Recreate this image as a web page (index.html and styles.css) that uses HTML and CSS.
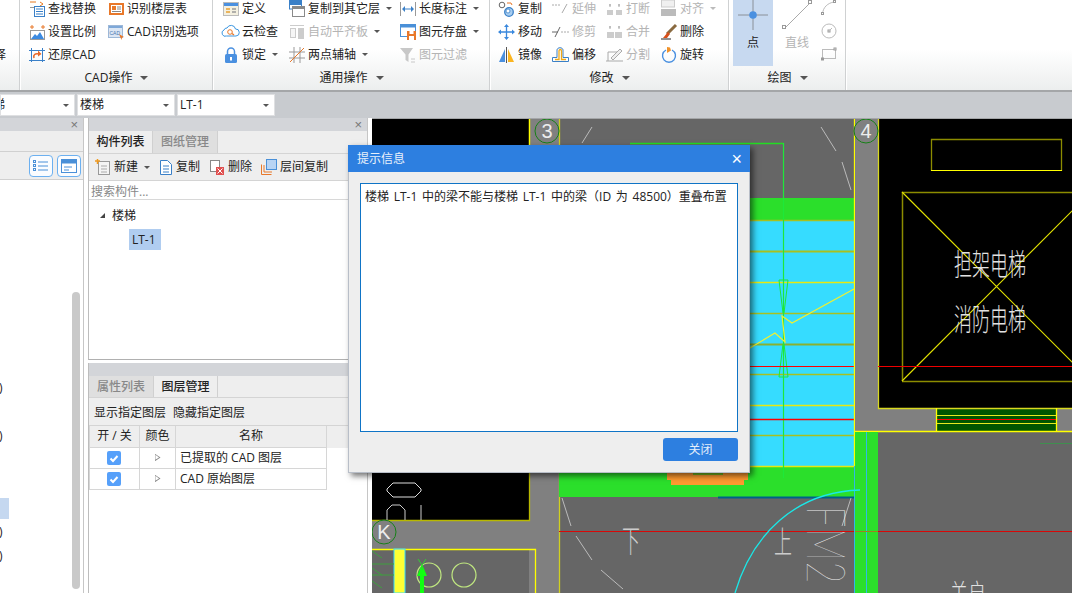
FILE: index.html
```html
<!DOCTYPE html>
<html lang="zh-CN">
<head>
<meta charset="utf-8">
<title>提示信息</title>
<link rel="stylesheet" href="styles.css">
</head>
<body>
<header class="ribbon">
  <section class="group g0"><div class="g-body"><span></span><span></span><span class="clip-text">择</span></div></section>

  <section class="group g1">
    <div class="g-body">
      <div class="item"><svg class="ic" viewBox="0 0 16 16"><path d="M1 1h6M11 1l3 2-3 2" fill="none" stroke="#e87a20"/><rect x="1" y="6" width="4" height="1" fill="#999"/><rect x="5.500" y="5.500" width="10" height="10" fill="#fff" stroke="#3a80c8"/><path d="M7 8h7M7 10.500h7M7 13h7" stroke="#3a80c8"/></svg><span>查找替换</span></div>
      <div class="item"><svg class="ic" viewBox="0 0 16 16"><rect x="1" y="2" width="15" height="12" fill="#e8782a"/><rect x="3" y="4" width="11" height="8" fill="#fff"/><rect x="4" y="5" width="4" height="4" fill="#e8782a"/><path d="M9 6h4M9 8h4M4 10.500h9" stroke="#888"/></svg><span>识别楼层表</span></div>
      <div class="item"><svg class="ic" viewBox="0 0 16 16"><path d="M1 3h4M3 1v4M12 3h4M14 1v4" stroke="#e8782a" fill="none"/><rect x="1.500" y="6.500" width="14" height="9" fill="#fff" stroke="#999"/><path d="M2 15l4-5 2 2 3-4 4 7z" fill="#3c8ae0"/></svg><span>设置比例</span></div>
      <div class="item"><svg class="ic" viewBox="0 0 16 16"><rect x="0.500" y="1.500" width="14" height="12" fill="#dbe6f4" stroke="#9db8d8"/><rect x="1" y="2" width="13" height="2" fill="#7ea8d8"/><text class="ic-text" x="1.500" y="10.500">CAD</text><path d="M11 10l5 3-2 .5-.5 2.500z" fill="#e8782a"/></svg><span>CAD识别选项</span></div>
      <div class="item"><svg class="ic" viewBox="0 0 16 16"><path d="M0 3.500h16M0 13.500h16M2.500 1v14M13.500 1v14" stroke="#3a80c8" fill="none"/><path d="M5 11c-1-3 1-5 5-4" fill="none" stroke="#e8682a" stroke-width="1.600"/><path d="M9 3.500l3.500 3.500-3.500 2.500z" fill="#e8682a"/></svg><span>还原CAD</span></div>
    </div>
    <div class="g-label"><span>CAD操作</span><i class="caret"></i></div>
  </section>

  <section class="group g2">
    <div class="g-body">
      <div class="item"><svg class="ic" viewBox="0 0 16 16"><rect x="0.500" y="1.500" width="15" height="13" fill="#f4f0e0" stroke="#bbb"/><rect x="1" y="2" width="14" height="3" fill="#4a90e0"/><path d="M3 8h4M3 11h4" stroke="#e8a030" stroke-width="1.500"/><path d="M9 8h4M9 11h4" stroke="#999" stroke-width="1.500"/></svg><span>定义</span></div>
      <div class="item"><svg class="ic" viewBox="0 0 16 16"><rect x="0.500" y="-2" width="12" height="10" fill="#fff" stroke="#3a80c8"/><rect x="0" y="-2" width="13" height="6" fill="#3a80c8"/><rect x="3.500" y="5.500" width="12" height="10" fill="#fff" stroke="#8a8a8a"/><rect x="3" y="5" width="13" height="3" fill="#8a8a8a"/></svg><span>复制到其它层</span><i class="caret sm"></i></div>
      <div class="item"><svg class="ic" viewBox="0 0 16 16"><path d="M.5 1v14" stroke="#999"/><path d="M15.500 1v14" stroke="#999"/><path d="M3 8h10" stroke="#3a80c8"/><path d="M2 8l3-3v6zM14 8l-3-3v6z" fill="#3a80c8"/></svg><span>长度标注</span><i class="caret sm"></i></div>

      <div class="item"><svg class="ic" viewBox="0 0 16 16"><path d="M1 6a3 3 0 0 1 3-2 4.500 4.500 0 0 1 8.500 1A3 3 0 0 1 13 12H3.500a3 3 0 0 1-2.500-6z" fill="#fff" stroke="#3c96e0"/><circle cx="7" cy="8" r="2.300" fill="none" stroke="#e8782a"/><path d="M9 9.500l2 1.500" stroke="#e8782a" stroke-width="1.300"/></svg><span>云检查</span></div>
      <div class="item off"><svg class="ic" viewBox="0 0 16 16"><rect x="1" y="1" width="14" height="1" fill="#ccc"/><rect x="1.500" y="4.500" width="5" height="9" fill="#f6f6f6" stroke="#ccc"/><rect x="9" y="4" width="6" height="11" fill="#ccc"/></svg><span>自动平齐板</span><i class="caret sm"></i></div>
      <div class="item"><svg class="ic" viewBox="0 0 16 16"><rect x="0.500" y="0.500" width="15" height="12" fill="#fff" stroke="#4a90d8"/><rect x="1" y="1" width="14" height="2.500" fill="#4a90d8"/><rect x="7" y="7" width="9" height="9" fill="#e8782a"/><rect x="9.500" y="7" width="4" height="3" fill="#fff"/><rect x="9" y="12" width="5" height="4" fill="#fff"/></svg><span>图元存盘</span><i class="caret sm"></i></div>

      <div class="item"><svg class="ic" viewBox="0 0 16 16"><rect x="2" y="7" width="12" height="9" rx="1.500" fill="#4a90e0"/><path d="M4.500 7V4.500a3.500 3.500 0 0 1 7 0V7" fill="none" stroke="#4a90e0" stroke-width="1.500"/><rect x="7" y="10" width="2" height="3.500" fill="#fff"/></svg><span>锁定</span><i class="caret sm"></i></div>
      <div class="item"><svg class="ic" viewBox="0 0 16 16"><path d="M0 5h16M0 11h16M5 0v16M11 0v16" stroke="#999" fill="none"/><path d="M1 15L15 1" stroke="#e8782a"/></svg><span>两点辅轴</span><i class="caret sm"></i></div>
      <div class="item off"><svg class="ic" viewBox="0 0 16 16"><path d="M0 1h13L8.500 7.500V15L5.500 13V7.500z" fill="#c8c8c8"/><path d="M11 12h4M11 15h4" stroke="#c8c8c8"/></svg><span>图元过滤</span></div>
    </div>
    <div class="g-label"><span>通用操作</span><i class="caret"></i></div>
  </section>

  <section class="group g3">
    <div class="g-body">
      <div class="item"><svg class="ic" viewBox="0 0 17 16"><circle cx="4" cy="4" r="2.800" fill="#fff" stroke="#666"/><path d="M9 2h4l1 2" fill="none" stroke="#e8782a"/><circle cx="11" cy="11" r="4.300" fill="#a8cdf0" stroke="#3a80c8" stroke-width="1.300"/><circle cx="10" cy="10" r="2" fill="#fff" stroke="#3a80c8" stroke-width=".8"/></svg><span>复制</span></div>
      <div class="item off"><svg class="ic" viewBox="0 0 17 16"><path d="M0 4h9" stroke="#aaa" stroke-dasharray="2 1"/><path d="M10 12l5-9" stroke="#aaa"/></svg><span>延伸</span></div>
      <div class="item off"><svg class="ic" viewBox="0 0 17 16"><rect x="1" y="9" width="6" height="5" fill="#ccc"/><rect x="10" y="9" width="6" height="5" fill="#ccc"/><path d="M3 4h2M12 4h2M4 3v3M13 3v3" stroke="#aaa"/></svg><span>打断</span></div>
      <div class="item off"><svg class="ic" viewBox="0 0 17 16"><rect x="1.500" y="-1" width="13" height="7" fill="#f0f0f0" stroke="#ccc"/><rect x="1" y="8" width="15" height="7" fill="#bbb"/></svg><span>对齐</span><i class="caret sm lite"></i></div>

      <div class="item"><svg class="ic" viewBox="0 0 17 16"><path d="M8.500 2v12M2 8h13" stroke="#3a88dd" stroke-width="1.300"/><path d="M8.500 0l2.500 3H6zM8.500 16l2.500-3H6zM0 8l3-2.500v5zM17 8l-3-2.500v5z" fill="#3a88dd"/></svg><span>移动</span></div>
      <div class="item off"><svg class="ic" viewBox="0 0 17 16"><path d="M0 8h6" stroke="#666"/><path d="M9 8h8" stroke="#aaa" stroke-dasharray="2 1"/><path d="M3 13l5-10" stroke="#666"/></svg><span>修剪</span></div>
      <div class="item off"><svg class="ic" viewBox="0 0 17 16"><rect x="1" y="8" width="15" height="6" fill="#ccc"/><path d="M3 3h2M12 3h2M4 2v3M13 2v3" stroke="#aaa"/><path d="M8.500 8v6" stroke="#fff"/></svg><span>合并</span></div>
      <div class="item"><svg class="ic" viewBox="0 0 17 16"><path d="M16 1L7 10" stroke="#8a6a40" stroke-width="3"/><path d="M8 8l2 2-3 4H3z" fill="#d8501a"/><path d="M1 15h10" stroke="#222"/></svg><span>删除</span></div>

      <div class="item"><svg class="ic" viewBox="0 0 17 16"><path d="M7 2v13H1z" fill="#4a90e0"/><path d="M10 2v13h6z" fill="#fbb520"/><path d="M8.500 0v16" stroke="#555"/></svg><span>镜像</span></div>
      <div class="item"><svg class="ic" viewBox="0 0 17 16"><path d="M.5 14.500V10.500h4.500V3c0-3 6-3 6 0v7.500h5.500v4z" fill="#fff" stroke="#3a80c8"/><path d="M3 12.500h4V4c0-2 2.500-2 2.500 0v8.500H14" fill="none" stroke="#f0a818" stroke-width="1.300"/></svg><span>偏移</span></div>
      <div class="item off"><svg class="ic" viewBox="0 0 17 16"><path d="M0 14h17M2 14V5h9" stroke="#aaa" fill="none"/><path d="M5 11l9-9 2 2-9 9z" fill="#eee" stroke="#aaa"/></svg><span>分割</span></div>
      <div class="item"><svg class="ic" viewBox="0 0 17 16"><path d="M6 3a6.500 6.500 0 1 0 6 0" fill="none" stroke="#4a90e0" stroke-width="1.400"/><path d="M7 0v6l4-2.500-1-3z" fill="#f0922a"/></svg><span>旋转</span></div>
    </div>
    <div class="g-label"><span>修改</span><i class="caret"></i></div>
  </section>

  <section class="group g4">
    <div class="draw-row">
      <div class="big active">
        <svg class="big-ic" viewBox="0 0 30 30"><path d="M15 0v30M0 15h30" stroke="#8a9098"/><circle cx="15" cy="15" r="3.800" fill="#4a90e0"/></svg>
        <span>点</span>
      </div>
      <div class="big off">
        <svg class="big-ic line" viewBox="0 0 34 30"><path d="M6 27L30 3" stroke="#aaa"/><rect x="2.500" y="25.500" width="3" height="3" fill="#fff" stroke="#999"/><rect x="28.500" y="0.500" width="3" height="3" fill="#fff" stroke="#999"/></svg>
        <span>直线</span>
      </div>
      <div class="mini">
        <svg class="mini-ic" viewBox="0 0 16 16"><path d="M1.500 14C2 7 7 3 13 2" fill="none" stroke="#bbb"/><rect x="0.500" y="12.500" width="2" height="2" fill="#fff" stroke="#999"/><rect x="12.500" y="0.500" width="2" height="2" fill="#fff" stroke="#999"/></svg>
        <svg class="mini-ic" viewBox="0 0 16 16"><circle cx="8" cy="8" r="7" fill="none" stroke="#bbb"/><rect x="7" y="7" width="2" height="2" fill="#fff" stroke="#999"/><path d="M8 8l3-3" stroke="#bbb"/></svg>
        <svg class="mini-ic" viewBox="0 0 16 16"><rect x="1.500" y="3.500" width="13" height="9" fill="none" stroke="#bbb"/><rect x="0.500" y="12" width="2" height="2" fill="#fff" stroke="#999"/><rect x="13" y="2" width="2" height="2" fill="#fff" stroke="#999"/></svg>
      </div>
    </div>
    <div class="g-label"><span>绘图</span><i class="caret"></i></div>
  </section>
</header>

<nav class="combos">
  <div class="combo c1"><span class="clip-text">梯</span><i class="caret sm"></i></div>
  <div class="combo c2"><span>楼梯</span><i class="caret sm"></i></div>
  <div class="combo c2"><span>LT-1</span><i class="caret sm"></i></div>
</nav>

<main class="main">
  <aside class="left">
    <div class="p-head"><span class="p-x">×</span></div>
    <div class="left-tabs"></div>
    <div class="left-tools">
      <button class="tool-btn"><svg viewBox="0 0 16 14"><path d="M5 3h10M5 7h10M5 11h10" stroke="#4a90d8"/><rect x="0.500" y="1.500" width="2" height="2" fill="none" stroke="#4a90d8"/><rect x="0.500" y="5.500" width="2" height="2" fill="none" stroke="#4a90d8"/><rect x="0.500" y="9.500" width="2" height="2" fill="none" stroke="#4a90d8"/></svg></button>
      <button class="tool-btn"><svg viewBox="0 0 16 14"><rect x="0.500" y="0.500" width="15" height="13" fill="#fff" stroke="#4a90d8"/><rect x="1" y="1" width="14" height="3.500" fill="#4a90d8"/><path d="M3 8h8M3 11h5" stroke="#4a90d8"/></svg></button>
    </div>
    <div class="left-list">
      <div class="l-row"></div><div class="l-row"></div><div class="l-row"></div><div class="l-row"></div>
      <div class="l-row"></div><div class="l-row"></div><div class="l-row"></div><div class="l-row"></div>
      <div class="l-row"><span class="clip-paren">)</span></div>
      <div class="l-row"></div>
      <div class="l-row"><span class="clip-paren">)</span></div>
      <div class="l-row"></div><div class="l-row"></div>
      <div class="l-row sel"></div>
      <div class="l-row"><span class="clip-paren">)</span></div>
      <div class="l-row"><span class="clip-paren">)</span></div>
      <div class="scroll"></div>
    </div>
  </aside>

  <div class="center">
    <section class="pane upper">
      <div class="p-head"><span class="p-x">×</span></div>
      <div class="tabs"><div class="tab on">构件列表</div><div class="tab">图纸管理</div></div>
      <div class="tools">
        <div class="tool t-new"><svg class="ic" viewBox="0 0 16 16"><rect x="3.500" y="2.500" width="11" height="13" fill="#f4f4f4" stroke="#999"/><path d="M6 7h6M6 10h6M6 13h6" stroke="#aaa"/><path d="M0 2h5M2.500 0v5" stroke="#f09a20" stroke-width="1.500"/></svg><span>新建</span><i class="caret sm"></i></div>
        <div class="tool t-copy"><svg class="ic" viewBox="0 0 16 16"><path d="M2.500 1.500h7l4 4v10h-11z" fill="#fff" stroke="#3a80c8"/><path d="M5 7h6M5 10h6M5 13h6" stroke="#3a80c8"/></svg><span>复制</span></div>
        <div class="tool t-del"><svg class="ic" viewBox="0 0 16 16"><rect x="1.500" y="1.500" width="9" height="11" fill="#fff" stroke="#888"/><rect x="7" y="8" width="8" height="8" fill="#e05050"/><path d="M8.500 9.500l5 5M13.500 9.500l-5 5" stroke="#fff"/></svg><span>删除</span></div>
        <div class="tool t-layer"><svg class="ic" viewBox="0 0 16 16"><path d="M.5 15.500v-10M.5 15.500h10M3 13V6M3 13h8" stroke="#e8782a" fill="none"/><rect x="5.500" y="0.500" width="10" height="10" fill="#b8d4f4" stroke="#4a90d8"/></svg><span>层间复制</span></div>
      </div>
      <div class="search">搜索构件...</div>
      <div class="tree">
        <div class="tree-root"><i class="tri"></i><span>楼梯</span></div>
        <div class="tree-leaf"><span>LT-1</span></div>
      </div>
    </section>

    <section class="pane lower">
      <div class="p-head"></div>
      <div class="tabs"><div class="tab">属性列表</div><div class="tab on">图层管理</div></div>
      <div class="tools layer-tools"><span>显示指定图层</span><span>隐藏指定图层</span></div>
      <div class="table-wrap">
        <table class="layers">
          <thead><tr><th class="c-a">开 / 关</th><th class="c-b">颜色</th><th class="c-c">名称</th></tr></thead>
          <tbody>
            <tr><td class="mid"><i class="check"><svg viewBox="0 0 14 14"><path d="M3.500 7.500l2.500 2.500 4.500-5" fill="none" stroke="#fff" stroke-width="2"/></svg></i></td><td class="mid"><i class="play"></i></td><td>已提取的 CAD 图层</td></tr>
            <tr><td class="mid"><i class="check"><svg viewBox="0 0 14 14"><path d="M3.500 7.500l2.500 2.500 4.500-5" fill="none" stroke="#fff" stroke-width="2"/></svg></i></td><td class="mid"><i class="play"></i></td><td>CAD 原始图层</td></tr>
          </tbody>
        </table>
      </div>
    </section>
  </div>

  <div class="canvas">
    <svg class="cad" viewBox="372 118 700 475" width="700" height="475">
      <rect x="372" y="118" width="700" height="475" fill="#666"/>
      <!-- left black room and walls -->
      <rect x="372" y="118" width="157" height="402" fill="#000"/>
      <rect x="529" y="118" width="30" height="475" fill="#808080"/>
      <rect x="372" y="520" width="187" height="29" fill="#808080"/>
      <rect x="535" y="549" width="24" height="44" fill="#808080"/>
      <path d="M529.500 118V520.500H372" fill="none" stroke="#b8b800" stroke-width="1.300"/>
      <path d="M529.500 118V200" fill="none" stroke="#ff0" stroke-width="1.300"/>
      <path d="M559.500 118V593" stroke="#d0d020" stroke-width="1.300"/>
      <path d="M372 549.500H535.500V593" fill="none" stroke="#ff0" stroke-width="1.300"/>
      <rect x="394" y="549" width="11" height="44" fill="#ff3" stroke="#36dcff"/>
      <!-- white shapes in black room -->
      <path d="M393 483h22l6 6v2l-6 6h-22l-6-6v-2z" fill="none" stroke="#ddd"/>
      <path d="M387 520v-10l5-5h8l5 5v10M421 505v15" fill="none" stroke="#ccc"/>
      <!-- lower-left room -->
      <g stroke="#3f9f3f" fill="none"><path d="M372 551l10 7M372 564h22M372 568l10 7M372 575h22M372 581l10 7"/></g>
      <circle cx="429" cy="575" r="12" fill="none" stroke="#c0e880" stroke-width="1.200"/>
      <circle cx="464" cy="575" r="12" fill="none" stroke="#c0e880" stroke-width="1.200"/>
      <path d="M422 593v-22" stroke="#1f1" stroke-width="4"/>
      <path d="M422 564l-5 12h10z" fill="#1f1"/>
      <path d="M418 559l4 6 4-6M422 565v5" stroke="#3c3" fill="none"/>
      <!-- centre room -->
      <rect x="559" y="198" width="296" height="22" fill="#2bdf2b"/>
      <rect x="559" y="220" width="296" height="246" fill="#36dcff"/>
      <rect x="559" y="466" width="296" height="31" fill="#2bdf2b"/>
      <path d="M718 497.500h137" stroke="#00608a" stroke-width="2"/>
      <path d="M630 143.500H783.500" stroke="#22dd22" stroke-width="1.500" fill="none"/>
      <g fill="none">
        <path d="M559 220.500h296M559 313.500h296M559 374.500h296M559 435.500h296" stroke="#a8c020" stroke-width="1.500"/>
        <path d="M559 251.500h296" stroke="#a8c020" stroke-width="1.800"/>
        <path d="M559 344.500h296" stroke="#8ab030" stroke-width="2.200"/>
        <path d="M559 282.500h296M559 405.500h296M559 466.500h296" stroke="#e8e810" stroke-width="1.600"/>
      </g>
      <path d="M783.500 143V478" stroke="#1ee83a" stroke-width="1.200"/>
      <path d="M779 280h9l-4 33h-1zM783 344h1l4 33h-9z" fill="none" stroke="#1ee83a"/>
      <path d="M750 348l25-15 10 9-3-26 10 7 62-34" fill="none" stroke="#f0f030" stroke-width="1.200"/>
      <path d="M559 366.500H855" stroke="#f00"/>
      <path d="M559 419.500H855" stroke="#f00" stroke-width="1.300"/>
      <path d="M559 531.500H1072" stroke="#d80808"/>
      <path d="M854.500 118V466" stroke="#ff0" stroke-width="1.300"/>
      <path d="M854.500 466V593" stroke="#30b8e8"/>
      <!-- stair landing orange -->
      <path d="M667 472h81v8h-4v5h-73v-5h-4z" fill="#ff9a30"/>
      <rect x="693" y="472" width="30" height="3" fill="#78b820"/>
      <!-- door swing lines -->
      <g stroke="#bbb" fill="none">
        <path d="M592 127l-10 16M821 127l15 24M842 162l9 28"/>
        <path d="M562 498l9 28M576 536l16 24M601 570l22 19M851 498l-9 28"/>
      </g>
      <!-- right column and lift shaft -->
      <rect x="855" y="118" width="23" height="313" fill="#808080"/>
      <rect x="878" y="408" width="194" height="23" fill="#808080"/>
      <rect x="878" y="118" width="194" height="290" fill="#000"/>
      <rect x="936" y="408" width="120" height="23" fill="#005500"/>
      <path d="M936 408.500h120" stroke="#30a8d0"/>
      <path d="M936 415.500h120M936 423.500h120" stroke="#e8e820"/>
      <path d="M936 419.500h120" stroke="#f00"/>
      <path d="M878.500 118V408.500H1072" fill="none" stroke="#d8d820" stroke-width="1.300"/>
      <path d="M854 431.500H1072" stroke="#ff0" stroke-width="1.300"/>
      <path d="M936.500 408V431M1056.500 408V431" stroke="#ff0" stroke-width="1.300"/>
      <path d="M931.500 171V139.500H1061.500V171" fill="none" stroke="#8c8c00" stroke-width="1.300"/>
      <path d="M931 170.500H1062" stroke="#ff0"/>
      <path d="M902.500 381V192.500H1072M902 381.500H1072" fill="none" stroke="#8c8c00" stroke-width="1.500"/>
      <path d="M902 192L1091 381M902 381L1091 192" stroke="#e0e000" stroke-width="1.200"/>
      <path d="M878 366.500H1072" stroke="#e00"/>
      <!-- green column and lower room -->
      <rect x="855" y="432" width="23" height="161" fill="#2bdf2b"/>
      <path d="M866.500 432V593" stroke="#30b8e8"/>
      <path d="M855 531.500H878" stroke="#a08020"/>
      <path d="M1040 443.500h32" stroke="#3f8f4f"/>
      <path d="M735 593C752 535 795 492 860 490" fill="none" stroke="#1ae8e8" stroke-width="1.300"/>
      <!-- axis bubbles -->
      <g fill="#808080" stroke="#178017">
        <circle cx="547" cy="131" r="12"/>
        <circle cx="866" cy="131" r="12"/>
        <circle cx="384" cy="532" r="12"/>
      </g>
      <text class="bubble" x="547" y="138">3</text>
      <text class="bubble" x="866" y="138">4</text>
      <text class="bubble" x="384" y="539">K</text>
      <!-- top edge of the drawing -->
      <path d="M372 118.500H1072" stroke="#a4a6a8"/>
      <!-- drawing labels -->
      <text class="cad-text" transform="translate(954 275) scale(1 1.650)">担架电梯</text>
      <text class="cad-text" transform="translate(954 330) scale(1 1.650)">消防电梯</text>
      <text class="cad-text dim" transform="translate(622 552) scale(1 1.700)">下</text>
      <text class="cad-text dim" transform="translate(774 553) scale(1 1.700)">上</text>
      <text class="cad-text" transform="translate(950 601) scale(1 1.300)">关户</text>
      <text class="cad-fm" transform="translate(807 506) rotate(90) scale(.72 1)">FM2</text>
    </svg>
  </div>
</main>

<section class="dialog" role="dialog">
  <div class="d-title"><span>提示信息</span><span class="d-x">×</span></div>
  <div class="d-body">
    <div class="d-msg">楼梯 LT-1 中的梁不能与楼梯 LT-1 中的梁（ID 为 48500）重叠布置</div>
    <div class="d-foot"><button class="d-btn">关闭</button></div>
  </div>
</section>
</body>
</html>
```
FILE: styles.css
```css
* { box-sizing: border-box; }
html, body { margin: 0; height: 593px; overflow: hidden; }
body {
  position: relative;
  font: 12px/14px "Open Sans", "Noto Sans CJK SC", "Liberation Sans", sans-serif;
  color: #222;
  background: #fff;
}
svg { display: block; }

/* ribbon */
.ribbon {
  display: flex;
  height: 92px;
  overflow: hidden;
  background: linear-gradient(#fff 55%, #eceeee);
  border-bottom: 2px solid #a4a6a8;
}
.group {
  display: flex;
  flex-direction: column;
  height: 90px;
  border-right: 1px solid #cfd1d2;
  box-shadow: 1px 0 0 #fff;
  margin-right: 1px;
}
.g0 { width: 20px; }
.g1 { width: 192px; }
.g2 { width: 276px; }
.g3 { width: 238px; }
.g4 { width: 116px; margin-right: 0; }
.g-body {
  display: grid;
  grid-auto-rows: 23px;
  height: 69px;
  margin-top: -3px;
  margin-bottom: 5px;
}
.g0 .g-body { grid-template-columns: 20px; }
.g1 .g-body { grid-template-columns: 79px 1fr; padding-left: 8px; }
.g2 .g-body { grid-template-columns: 66px 111px 1fr; padding-left: 9px; }
.g3 .g-body { grid-template-columns: 54px 54px 54px 1fr; padding-left: 7px; }
.item { display: flex; align-items: center; gap: 3px; white-space: nowrap; }
.ic { width: 16px; height: 16px; flex: none; overflow: visible; }
.g3 .ic { width: 17px; }
.ic-text { font: 5px "Liberation Sans", sans-serif; fill: #4a78b0; }
.off { color: #b4b4b4; }
.clip-text { display: block; width: 6px; overflow: hidden; direction: rtl; align-self: center; }
.g-label {
  display: flex;
  justify-content: center;
  align-items: center;
  gap: 8px;
  height: 14px;
  color: #222;
}
.caret {
  display: inline-block;
  width: 0;
  height: 0;
  border-left: 4px solid transparent;
  border-right: 4px solid transparent;
  border-top: 4px solid #555;
}
.caret.sm { border-left-width: 3px; border-right-width: 3px; border-top-width: 3px; margin-left: 3px; }
.caret.lite { border-top-color: #bbb; }

.draw-row { display: flex; height: 66px; margin-bottom: 5px; padding-left: 3px; }
.big { display: flex; flex-direction: column; align-items: center; width: 40px; }
.big.active { background: #c7d9f0; }
.big-ic { width: 30px; height: 30px; flex: none; margin-bottom: 6px; }
.big-ic.line { width: 34px; }
.big.off { width: 46px; padding-left: 2px; }
.mini { display: flex; flex-direction: column; gap: 7px; margin-left: 2px; }
.mini-ic { width: 16px; height: 16px; }

/* combos */
.combos {
  display: flex;
  gap: 2px;
  height: 26px;
  padding-top: 2px;
  background: #c8cbcf;
}
.combo {
  display: flex;
  align-items: center;
  justify-content: space-between;
  height: 22px;
  padding: 0 5px 0 2px;
  background: #fff;
  border: 1px solid #dfe0e2;
}
.c1 { width: 75px; padding-left: 0; }
.c1 .clip-text { width: 4px; }
.c2 { width: 98px; }

/* main */
.main { display: flex; height: 475px; overflow: hidden; }
.left {
  display: flex;
  flex-direction: column;
  width: 84px;
  margin-right: 4px;
  border-right: 1px solid #c6c6c6;
}
.p-head {
  display: flex;
  align-items: center;
  justify-content: flex-end;
  height: 13px;
  padding-right: 5px;
  background: #d3d5d9;
  flex: none;
}
.p-x { font: 13px/13px "Liberation Sans", sans-serif; color: #777; }
.left-tabs { height: 21px; background: #eee; border-bottom: 1px solid #d0d0d0; flex: none; }
.left-tools {
  display: flex;
  justify-content: flex-end;
  gap: 4px;
  height: 28px;
  padding: 3px 2px 0 0;
  background: #eee;
  border-bottom: 1px solid #d0d0d0;
  flex: none;
}
.tool-btn {
  display: flex;
  align-items: center;
  justify-content: center;
  width: 24px;
  height: 22px;
  padding: 0;
  background: #fafcff;
  border: 1px solid #6cb0f0;
  border-radius: 4px;
}
.tool-btn svg { width: 16px; height: 14px; }
.left-list { position: relative; flex: 1; padding-top: 4px; overflow: hidden; }
.l-row { display: flex; align-items: center; height: 24px; }
.clip-paren { margin-left: -1px; }
.l-row.sel::before { content: ""; display: block; width: 9px; height: 21px; background: #c5d8f0; }
.scroll {
  position: absolute;
  top: 112px;
  left: 72px;
  width: 8px;
  height: 297px;
  background: #c9c9c9;
  border-radius: 4px;
}

.center { display: flex; flex-direction: column; gap: 3px; width: 280px; }
.pane { display: flex; flex-direction: column; border-left: 1px solid #bdbdbd; border-right: 1px solid #c6c6c6; }
.upper { height: 242px; border-bottom: 1px solid #b0b0b0; }
.lower { flex: 1; }
.tabs {
  display: flex;
  height: 23px;
  background: #eee;
  border-bottom: 1px solid #d4d4d4;
  flex: none;
}
.lower .tabs { height: 22px; }
.tab {
  display: flex;
  align-items: center;
  justify-content: center;
  width: 65px;
  color: #888;
  font-weight: 500;
  background: #dfdfdf;
  border-right: 1px solid #d0d0d0;
}
.tab.on { width: 64px; color: #222; background: #eee; }
.tools {
  display: flex;
  align-items: center;
  height: 27px;
  background: #eee;
  border-bottom: 1px solid #d4d4d4;
  flex: none;
}
.tool { display: flex; align-items: center; gap: 3px; white-space: nowrap; }
.t-new { margin-left: 6px; }
.t-copy { margin-left: 8px; gap: 2px; }
.t-del { margin-left: 9px; }
.t-layer { margin-left: 9px; }
.search { height: 19px; padding: 4px 2px 0; color: #888; background: #fff; border-bottom: 1px solid #d8d8d8; flex: none; }
.tree { flex: 1; background: #fff; }
.tree-root { display: flex; align-items: center; height: 29px; padding: 2px 0 0 11px; gap: 7px; }
.tri { width: 0; height: 0; border-left: 5px solid transparent; border-bottom: 5px solid #444; }
.tree-leaf { height: 21px; padding-left: 40px; }
.tree-leaf span { display: flex; align-items: center; width: 32px; height: 21px; padding-left: 3px; background: #b0cdf0; }

.layer-tools { height: 28px; gap: 7px; padding: 2px 0 0 5px; }
.table-wrap { flex: 1; background: linear-gradient(#eee 22px, #fff 22px); }
.layers { width: 238px; border-collapse: collapse; table-layout: fixed; margin: 0; }
.layers th, .layers td { height: 21px; padding: 0; border: 1px solid #d6d6d6; font-weight: 400; }
.layers thead th { background: #eee; border-top: 0; }
.layers td { background: #fff; padding-left: 4px; }
.layers td.mid { padding-left: 0; }
.c-a { width: 50px; }
.c-b { width: 36px; }
.check {
  display: block;
  width: 14px;
  height: 14px;
  margin-left: 17px;
  background: #56a0fa;
  border-radius: 2px;
}
.play {
  display: block;
  width: 6px;
  height: 8px;
  margin: 0 auto;
  clip-path: polygon(0 0, 100% 50%, 0 100%, 0 85%, 75% 50%, 15% 15%, 15% 85%, 0 85%);
  background: #888;
}

/* CAD canvas */
.canvas { width: 704px; padding-left: 4px; flex: none; }
.cad { display: block; }
.bubble { font: 20px "Liberation Sans", sans-serif; fill: #eee; text-anchor: middle; }
.cad-text { font: 200 18px "Noto Sans CJK SC", sans-serif; fill: #e2e2e2; }
.cad-text.dim { fill: #ccc; }
.cad-fm { font: 100 53px Lato, "Liberation Sans", sans-serif; fill: #eee; }

/* dialog */
.dialog {
  position: absolute;
  left: 348px;
  top: 145px;
  width: 402px;
  height: 328px;
  display: flex;
  flex-direction: column;
  background: #eee;
  border: 1px solid #b8bec8;
  border-top: 0;
  box-shadow: 3px 3px 6px rgba(0, 0, 0, .55);
}
.d-title {
  display: flex;
  align-items: center;
  justify-content: space-between;
  height: 27px;
  margin: 0 -1px;
  padding: 0 8px 0 9px;
  color: #e8f0fb;
  background: #2d7fe0;
  flex: none;
}
.d-x { font: 18px/18px "Liberation Sans", sans-serif; color: #fff; }
.d-body { display: flex; flex-direction: column; flex: 1; padding: 11px; }
.d-msg {
  height: 249px;
  padding: 4px;
  background: #fff;
  border: 1px solid #0f74c6;
  line-height: 17px;
  word-spacing: 1.600px;
  white-space: nowrap;
}
.d-foot { display: flex; justify-content: flex-end; margin-top: 6px; }
.d-btn {
  width: 75px;
  height: 23px;
  padding: 0;
  font: inherit;
  color: #e4eefb;
  background: #2d7fe0;
  border: 0;
  border-radius: 3px;
}
```
